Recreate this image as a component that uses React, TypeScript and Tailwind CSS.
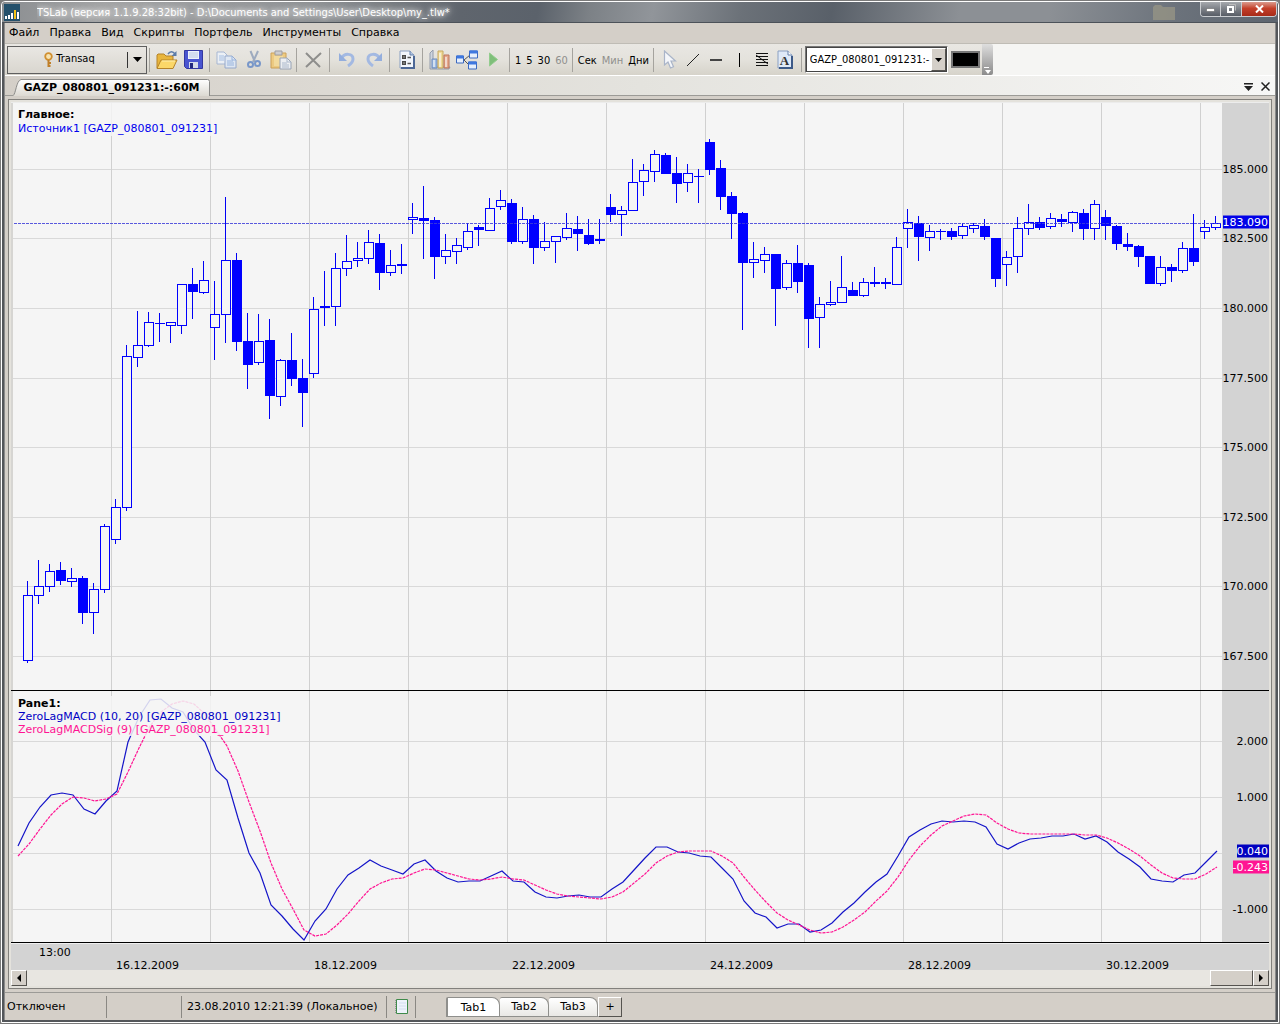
import React, { useState } from 'react';
import { clsx } from 'clsx';

// One hourly bar: high, body top, body bottom, low, 1 = falling (filled)
type Candle = [number, number, number, number, number];

const STEP = 11;

const candles: Candle[] = [
  [581, 595, 661, 663, 0], [560, 586, 596, 604, 0], [564, 571, 587, 592, 0], [562, 570, 581, 585, 1],
  [568, 578, 582, 587, 0], [576, 578, 613, 624, 1], [583, 589, 613, 634, 0], [524, 526, 590, 593, 0],
  [499, 507, 540, 544, 0], [345, 356, 508, 511, 0], [311, 345, 358, 367, 0], [312, 322, 346, 347, 0],
  [313, 323, 324, 342, 1], [322, 322, 326, 343, 0], [284, 284, 326, 334, 0], [268, 284, 292, 319, 1],
  [261, 280, 293, 294, 0], [281, 314, 328, 360, 0], [197, 260, 315, 343, 0], [253, 260, 342, 351, 1],
  [313, 341, 365, 389, 1], [314, 341, 363, 365, 0], [319, 340, 396, 419, 1], [359, 360, 397, 406, 0],
  [333, 360, 379, 386, 1], [359, 378, 393, 427, 1], [297, 309, 374, 378, 0], [271, 306, 308, 326, 1],
  [253, 268, 307, 326, 0], [235, 261, 269, 276, 0], [242, 258, 261, 267, 0], [230, 242, 259, 264, 0],
  [234, 243, 273, 290, 1], [250, 265, 273, 276, 0], [244, 264, 266, 274, 1], [203, 217, 220, 234, 0],
  [186, 218, 221, 259, 1], [217, 220, 257, 279, 1], [234, 250, 257, 264, 0], [238, 245, 252, 264, 0],
  [223, 231, 248, 250, 0], [225, 227, 230, 246, 1], [198, 208, 231, 231, 0], [190, 200, 207, 210, 0],
  [199, 203, 242, 244, 1], [207, 219, 242, 244, 0], [215, 219, 248, 264, 1], [222, 241, 248, 251, 0],
  [236, 236, 242, 263, 0], [213, 228, 238, 240, 0], [216, 229, 234, 251, 1], [219, 235, 244, 245, 1],
  [219, 239, 241, 244, 1], [194, 207, 215, 222, 1], [206, 210, 215, 236, 0], [159, 182, 211, 211, 0],
  [164, 170, 182, 196, 0], [150, 154, 172, 182, 0], [153, 155, 174, 174, 1], [157, 173, 184, 203, 1],
  [164, 173, 183, 192, 0], [169, 176, 177, 203, 1], [139, 142, 170, 175, 1], [160, 168, 197, 210, 1],
  [192, 196, 214, 239, 1], [212, 213, 263, 330, 1], [242, 259, 263, 278, 0], [247, 254, 261, 273, 0],
  [254, 254, 289, 326, 1], [260, 263, 288, 290, 0], [245, 263, 282, 293, 1], [263, 265, 319, 348, 1],
  [297, 304, 318, 348, 0], [281, 302, 305, 306, 0], [256, 287, 303, 303, 0], [282, 290, 296, 296, 1],
  [278, 282, 296, 297, 0], [267, 282, 284, 287, 1], [278, 282, 284, 289, 1], [237, 247, 285, 285, 0],
  [209, 222, 229, 248, 0], [216, 223, 237, 261, 1], [225, 231, 238, 251, 0], [229, 231, 232, 240, 1],
  [228, 231, 237, 240, 1], [223, 226, 236, 239, 0], [223, 225, 229, 233, 0], [219, 226, 237, 240, 1],
  [238, 238, 279, 287, 1], [251, 257, 265, 286, 0], [217, 228, 257, 273, 0], [204, 222, 229, 235, 0],
  [217, 222, 228, 230, 1], [213, 218, 227, 229, 0], [214, 219, 222, 227, 1], [211, 212, 223, 232, 0],
  [209, 213, 229, 240, 1], [200, 204, 229, 240, 0], [210, 217, 226, 240, 1], [225, 226, 244, 250, 1],
  [233, 244, 247, 251, 1], [245, 246, 257, 267, 1], [256, 256, 284, 284, 1], [256, 267, 284, 286, 0],
  [264, 267, 271, 282, 1], [242, 248, 271, 273, 0], [214, 248, 262, 266, 1], [220, 227, 232, 239, 0],
  [216, 223, 228, 230, 0],
];

const macd = [
  846, 823, 807, 795, 793, 795, 809, 814, 801, 791, 742, 717, 700, 699, 708, 712, 730, 742, 770, 780,
  818, 853, 873, 905, 916, 929, 940, 921, 909, 889, 875, 868, 860, 866, 870, 874, 864, 860, 871, 878,
  882, 881, 881, 876, 871, 881, 882, 892, 897, 898, 896, 895, 897, 897, 889, 882, 870, 858, 847, 847,
  852, 853, 856, 857, 868, 879, 901, 913, 917, 928, 924, 924, 932, 930, 923, 912, 903, 892, 882, 874,
  856, 837, 830, 824, 821, 822, 821, 822, 827, 844, 849, 843, 839, 838, 836, 836, 834, 839, 836, 842,
  852, 859, 867, 879, 881, 882, 875, 873, 862, 851,
];

const signal = [
  856, 844, 829, 815, 804, 797, 798, 801, 799, 794, 772, 748, 726, 712, 704, 701, 704, 714, 730, 746,
  771, 802, 831, 863, 889, 909, 930, 936, 934, 925, 914, 901, 889, 883, 879, 878, 873, 869, 870, 873,
  876, 879, 880, 879, 877, 879, 880, 885, 890, 894, 896, 897, 898, 899, 897, 892, 883, 874, 863, 856,
  852, 851, 851, 851, 856, 863, 877, 890, 902, 913, 920, 925, 930, 933, 932, 927, 920, 912, 901, 891,
  877, 860, 846, 835, 826, 821, 816, 814, 815, 823, 829, 833, 834, 834, 834, 834, 834, 835, 835, 838,
  843, 849, 856, 865, 873, 878, 879, 879, 874, 867,
];

// Chart space of the two panes
const PLOT = { left: 13, width: 1209 };
const MAIN = { top: 103, height: 587 };
const SUB = { top: 691, height: 251 };

const dayLines = [111, 210, 309, 408, 507, 606, 705, 804, 903, 1002, 1101, 1200];

const priceTicks = [
  { y: 169, label: '185.000' },
  { y: 238, label: '182.500' },
  { y: 308, label: '180.000' },
  { y: 378, label: '177.500' },
  { y: 447, label: '175.000' },
  { y: 517, label: '172.500' },
  { y: 586, label: '170.000' },
  { y: 656, label: '167.500' },
];

const macdTicks = [
  { y: 741, label: '2.000' },
  { y: 797, label: '1.000' },
  { y: 853, label: '' },
  { y: 909, label: '-1.000' },
];

const dates = [
  { x: 116, label: '16.12.2009' },
  { x: 314, label: '18.12.2009' },
  { x: 512, label: '22.12.2009' },
  { x: 710, label: '24.12.2009' },
  { x: 908, label: '28.12.2009' },
  { x: 1106, label: '30.12.2009' },
];

const toPoints = (values: number[]) => values.map((y, i) => `${18 + i * STEP},${y}`).join(' ');

const Grid = ({ ticks, top, height }: { ticks: { y: number }[]; top: number; height: number }) => (
  <g shapeRendering="crispEdges">
    {ticks.map((t) => (
      <rect key={t.y} x={PLOT.left} y={t.y} width={PLOT.width} height={1} fill="#d9d9d9" />
    ))}
    {dayLines.map((x) => (
      <rect key={x} x={x} y={top} width={1} height={height} fill="#d0d0d0" />
    ))}
  </g>
);

interface AxisLabelProps {
  y: number;
  pane: { top: number; height: number };
  className?: string;
  children: React.ReactNode;
}

const AxisLabel = ({ y, pane, className, children }: AxisLabelProps) => (
  <span
    className={clsx('absolute right-0 -translate-y-1/2 pr-px leading-[13px]', className)}
    style={{ top: `${((y - pane.top) / pane.height) * 100}%` }}
  >
    {children}
  </span>
);

const MainPane = () => (
  <section className="flex min-h-0 border-t border-[#ececec]" aria-label="Главное">
    <div className="relative min-w-0 flex-1 border-l-2 border-[#d6d5d2] bg-[#f5f5f5]">
      <svg
        className="block h-full w-full"
        viewBox={`${PLOT.left} ${MAIN.top} ${PLOT.width} ${MAIN.height}`}
        preserveAspectRatio="none"
      >
        <Grid ticks={priceTicks} top={MAIN.top} height={MAIN.height} />
        <g shapeRendering="crispEdges">
          {candles.map(([high, top, bottom, low, falling], i) => {
            const x = 23 + i * STEP;
            return (
              <g key={i}>
                <rect x={x + 4} y={high} width={1} height={low - high} fill="#0000f5" />
                {falling ? (
                  <rect x={x} y={top} width={10} height={bottom - top} fill="#0000ff" />
                ) : (
                  <rect
                    x={x + 0.5}
                    y={top + 0.5}
                    width={9}
                    height={bottom - top - 1}
                    fill="#f5f5f5"
                    stroke="#0000ff"
                  />
                )}
              </g>
            );
          })}
          <path d="M14 223.5H1222" stroke="#3c3cd8" strokeOpacity="0.85" strokeDasharray="3 1" />
        </g>
      </svg>
      <div className="absolute left-0 top-0 bg-[#f5f5f5]/85 px-[5px] pt-[5px] leading-[14px]">
        <h2 className="font-bold">Главное:</h2>
        <p className="text-[#0000ee]">Источник1 [GAZP_080801_091231]</p>
      </div>
    </div>
    <div className="relative w-[47px] bg-[#d3d3d3]">
      {priceTicks.map((t) => (
        <AxisLabel key={t.y} y={t.y} pane={MAIN}>{t.label}</AxisLabel>
      ))}
      <AxisLabel y={222} pane={MAIN} className="bg-[#0000e8] text-white">183.090</AxisLabel>
    </div>
  </section>
);

const MacdPane = () => (
  <section className="flex min-h-0" aria-label="Pane1">
    <div className="relative min-w-0 flex-1 border-l-2 border-[#d6d5d2] bg-[#f5f5f5]">
      <svg
        className="block h-full w-full"
        viewBox={`${PLOT.left} ${SUB.top} ${PLOT.width} ${SUB.height}`}
        preserveAspectRatio="none"
      >
        <Grid ticks={macdTicks} top={SUB.top} height={SUB.height} />
        <polyline points={toPoints(macd)} fill="none" stroke="#1414c8" strokeWidth="1.2" />
        <polyline
          points={toPoints(signal)}
          fill="none"
          stroke="#ff1493"
          strokeWidth="1.2"
          strokeDasharray="3 1"
        />
      </svg>
      <div className="absolute left-0 top-[5px] bg-[#f5f5f5]/85 px-[5px] pt-px leading-[13px]">
        <h2 className="font-bold">Pane1:</h2>
        <p className="text-[#0000c4]">ZeroLagMACD (10, 20) [GAZP_080801_091231]</p>
        <p className="text-[#ff1493]">ZeroLagMACDSig (9) [GAZP_080801_091231]</p>
      </div>
    </div>
    <div className="relative w-[47px] bg-[#d3d3d3]">
      {macdTicks.map((t) => (
        <AxisLabel key={t.y} y={t.y} pane={SUB}>{t.label}</AxisLabel>
      ))}
      <AxisLabel y={851} pane={SUB} className="bg-[#0000c0] text-white">0.040</AxisLabel>
      <AxisLabel y={867} pane={SUB} className="bg-[#ff1493] text-white">-0.243</AxisLabel>
    </div>
  </section>
);

const TimeAxis = () => (
  <div className="relative border-t border-[#efefef] bg-[#d3d3d3] leading-[13px]">
    <span className="absolute left-7 top-0.5">13:00</span>
    {dates.map((d) => (
      <span
        key={d.label}
        className="absolute top-[15px]"
        style={{ left: `${((d.x - 11) / 1258) * 100}%` }}
      >
        {d.label}
      </span>
    ))}
  </div>
);

const raised = 'border border-t-white border-l-white border-r-[#55534f] border-b-[#55534f] bg-[#d4cfc8]';

const ScrollBar = () => (
  <div className="flex bg-[#e8e6e1]">
    <button aria-label="Назад" className={clsx('flex w-4 items-center justify-center', raised)}>
      <svg width="4" height="8" viewBox="0 0 4 8"><path d="M4 0v8L0 4z" /></svg>
    </button>
    <div className="flex flex-1 justify-end">
      <div className={clsx('w-[43px]', raised)} />
    </div>
    <button aria-label="Вперёд" className={clsx('flex w-4 items-center justify-center', raised)}>
      <svg width="4" height="8" viewBox="0 0 4 8"><path d="M0 0v8l4-4z" /></svg>
    </button>
  </div>
);

const TitleBar = () => (
  <header className="flex h-[21px] items-center rounded-t-sm border-b border-[#4c5259] bg-[linear-gradient(100deg,#8b8e91_0%,#a2a3a4_8%,#8d9093_25%,#5f656d_36%,#5b626b_42%,#7c8186_46%,#91959a_51%,#6b7178_58%,#596069_65%,#8c9095_75%,#8c9095_82%,#6b727b_92%,#5d656f_100%)] pl-0.5 pr-px">
    <svg className="mr-[17px]" width="16" height="17" viewBox="0 0 16 17">
      <path d="M0 0h16v17H0z" fill="#24506b" />
      <path d="M1 12h2v3H1zM4 11h2v4H4zM7 9h2v6H7zM13 8h2v7h-2z" fill="#fff" />
      <path d="M10 6h2v9h-2z" fill="#f5c518" />
    </svg>
    <h1 className="flex-1 truncate font-['DejaVu_Sans_Condensed','Liberation_Sans',sans-serif] leading-[19px] text-white [text-shadow:0_0_5px_#fff,0_0_8px_#ddd]">
      TSLab (версия 1.1.9.28:32bit) - D:\Documents and Settings\User\Desktop\my_.tlw*
    </h1>
    <svg className="mr-6" width="24" height="16" viewBox="0 0 24 16">
      <path d="M1 3l2-2h6l2 2h12v13H1z" fill="#9b9986" opacity="0.7" />
    </svg>
    <div className="flex h-[15px] self-start overflow-hidden rounded-b border border-t-0 border-[#c9ccd0]">
      <button aria-label="Свернуть" className="flex w-5 items-center justify-center border-r border-[#c9ccd0] bg-linear-to-b from-[#a6a9ad] via-[#7c8087] via-50% to-[#585d66] pt-0.5">
        <svg width="9" height="4" viewBox="0 0 9 4"><path d="M.5.5h8v3h-8z" fill="#fff" stroke="#555" strokeWidth=".5" /></svg>
      </button>
      <button aria-label="Восстановить" className="flex w-[21px] items-center justify-center border-r border-[#c9ccd0] bg-linear-to-b from-[#a6a9ad] via-[#7c8087] via-50% to-[#585d66]">
        <svg width="10" height="10" viewBox="0 0 10 10" fill="none" stroke="#fff">
          <path d="M3 .5h6.500v6" stroke="#bbb" />
          <path d="M2 3h5v5H2z" strokeWidth="2" />
        </svg>
      </button>
      <button aria-label="Закрыть" className="flex w-[34px] items-center justify-center bg-linear-to-b from-[#d99a8d] via-[#c4402a] via-45% to-[#a82a18]">
        <svg width="9" height="8" viewBox="0 0 9 8" stroke="#fff" strokeWidth="2"><path d="M1 .5l7 7M8 .5l-7 7" /></svg>
      </button>
    </div>
  </header>
);

const menu = ['Файл', 'Правка', 'Вид', 'Скрипты', 'Портфель', 'Инструменты', 'Справка'];

const Separator = () => <span className="ml-0.5 mr-[3px] h-6 w-px shrink-0 bg-[#a5a39e]" />;

const IconButton = ({ label, narrow, children }: { label: string; narrow?: boolean; children: React.ReactNode }) => (
  <button
    aria-label={label}
    title={label}
    className={clsx('flex h-6 shrink-0 items-center justify-center', narrow ? 'w-[23px]' : 'w-[27px]')}
  >
    {children}
  </button>
);

const OpenIcon = () => (
  <svg width="22" height="20" viewBox="0 0 22 20">
    <path d="M1 18V5l1-1h6l2 2h7v4" fill="#e8b53c" stroke="#b58328" />
    <path d="M1 18.500L5 10h16l-4 8.500z" fill="#fbd768" stroke="#b58328" />
    <path d="M6 11h13" stroke="#fff0b0" />
    <path d="M12 4c2-3 5-3 7 0" fill="none" stroke="#5b7ba8" strokeWidth="1.500" />
    <path d="M20.500 1v5h-5z" fill="#5b7ba8" />
  </svg>
);

const SaveIcon = () => (
  <svg width="19" height="19" viewBox="0 0 19 19">
    <path d="M.5.5h18v18h-16l-2-2z" fill="#4a55d0" stroke="#3438a0" />
    <path d="M4 1h11v8H4z" fill="#eef2fb" />
    <path d="M5 3h9M5 5h9M5 7h9" stroke="#b9c6e4" />
    <path d="M5 12h9v6H5z" fill="#d6dbe8" />
    <path d="M6 13h3v5H6z" fill="#23287e" />
  </svg>
);

const CopyIcon = () => (
  <svg width="21" height="18" viewBox="0 0 21 18" opacity="0.75">
    <path d="M1 1h7l3 3v9H1z" fill="#eef4fd" stroke="#93a9d0" />
    <path d="M3 5h5M3 7h5M3 9h5" stroke="#8fb2e6" />
    <path d="M9 5h7l4 4v8H9z" fill="#dfeafb" stroke="#7f98c8" />
    <path d="M16 5v4h4M11 10h6M11 12h7M11 14h7" fill="none" stroke="#7fa5e0" />
  </svg>
);

const CutIcon = () => (
  <svg width="14" height="19" viewBox="0 0 14 19" fill="none" opacity="0.8">
    <path d="M3.500 1L8 12M11 1L6 12" stroke="#8c9db8" strokeWidth="2" />
    <circle cx="3.500" cy="14.500" r="2.500" stroke="#5f86c6" strokeWidth="2" />
    <circle cx="10.500" cy="13.500" r="2.500" stroke="#5f86c6" strokeWidth="2" />
  </svg>
);

const PasteIcon = () => (
  <svg width="22" height="20" viewBox="0 0 22 20" opacity="0.8">
    <path d="M1 3h15v15H1z" fill="#efc56c" stroke="#c79138" />
    <path d="M5 1h7v4H5z" fill="#c8c8cc" stroke="#8d8d95" />
    <path d="M4 6h9v10H4z" fill="#f6d98e" />
    <path d="M10 8h7l4 4v7H10z" fill="#eef2f8" stroke="#8795ad" />
    <path d="M17 8v4h4M12 13h5M12 15h7M12 17h7" fill="none" stroke="#9fb0ca" />
  </svg>
);

const UndoIcon = ({ flip }: { flip?: boolean }) => (
  <svg width="18" height="17" viewBox="0 0 18 17" className={clsx(flip && '-scale-x-100')}>
    <path d="M4 7c2-5 11-5 11 1 0 3-2 5-5 7" fill="none" stroke="#a3b9e2" strokeWidth="3" />
    <path d="M1 2v8h8z" fill="#94aedd" />
  </svg>
);

const PropsIcon = () => (
  <svg width="16" height="19" viewBox="0 0 16 19">
    <path d="M1 1h10l4 4v13H1z" fill="#f2f6fc" stroke="#8ba0c2" />
    <path d="M15 6v12H2" fill="none" stroke="#4d6896" strokeWidth="2" />
    <path d="M11 1v4h4" fill="#b4c6e2" stroke="#6480aa" />
    <path d="M3 5h4v4H3zM3 11h4v4H3z" fill="#4a4a4a" />
    <path d="M8.500 7.500H12M8.500 13.500H12" stroke="#555" strokeWidth="1.500" />
    <path d="M4.500 6.500h1v1h-1zM4.500 12.500h1v1h-1z" fill="#fff" />
  </svg>
);

const ChartIcon = () => (
  <svg width="22" height="21" viewBox="0 0 22 21" opacity="0.8">
    <path d="M1 4v16h19l1-2H4V1z" fill="#c9d2e0" stroke="#7f8ba0" />
    <path d="M3 10h5v9H3z" fill="#8db4ea" stroke="#5478b4" />
    <path d="M9 2h5v17H9z" fill="#f3d98a" stroke="#c19a3e" />
    <path d="M15 6h5v13h-5z" fill="#e79a7a" stroke="#b35a3a" />
    <path d="M5 11v7M11 4v14M17 8v10" stroke="#fff" strokeOpacity="0.6" strokeWidth="2" />
  </svg>
);

const NodesIcon = () => (
  <svg width="22" height="20" viewBox="0 0 22 20">
    <path d="M8 10l6-5M8 10l5 5" stroke="#555" />
    <g fill="#e6effc" stroke="#3a68c0">
      <path d="M.5 6h7v7h-7zM13.500 1h8v7h-8zM12.500 12h8v7h-8z" />
    </g>
    <path d="M.5 5.500h7v3h-7zM13.500.5h8v3h-8zM12.500 11.500h8v3h-8z" fill="#3f78e0" />
  </svg>
);

const PlayIcon = () => (
  <svg width="9" height="15" viewBox="0 0 9 15"><path d="M.5 1l8 6.500-8 6.500z" fill="#7fbf7a" stroke="#93cc8e" /></svg>
);

const CursorIcon = () => (
  <svg width="14" height="19" viewBox="0 0 14 19">
    <path d="M1.500 1v14l3.500-3 2.500 6 3-1.300-2.500-5.700H12.500z" fill="#f4f6fa" stroke="#a9b4c8" strokeWidth="1.200" />
  </svg>
);

const FibIcon = () => (
  <svg width="14" height="15" viewBox="0 0 14 15" stroke="#111">
    <path d="M1 1.500h12M1 4.500h12M1 7.500h12M1 10.500h12M1 13.500h12M1 3l12 9" />
  </svg>
);

const TextIcon = () => (
  <svg width="16" height="19" viewBox="0 0 16 19">
    <path d="M1 1h10l4 4v13H1z" fill="#dfe9f7" stroke="#8ba0c2" />
    <path d="M15 6v12H2" fill="none" stroke="#3d5a88" strokeWidth="2" />
    <path d="M11 1v4h4" fill="#fff" stroke="#6480aa" />
    <text x="7.500" y="15" textAnchor="middle" fontSize="13" fontWeight="bold" fontFamily="Liberation Serif, serif" fill="#333">A</text>
  </svg>
);

const Toolbar = () => {
  const [symbol, setSymbol] = useState('GAZP_080801_091231:-');

  return (
    <div className="flex h-8 border-b border-white bg-[#f5f5f3] font-['DejaVu_Sans_Condensed','Liberation_Sans',sans-serif]">
      <div className="flex items-center bg-linear-to-b from-[#e9e7e3] via-[#e4e2dc] to-[#d6d3ca] pl-0.5 pr-0.5">
        <div className="flex h-7 w-[140px] shrink-0 items-center border border-[#5f5f5f] bg-linear-to-b from-[#e9e7e3] to-[#d9d6cf]">
          <button className="flex flex-1 items-center justify-center gap-[3px] pl-1">
            <svg width="9" height="16" viewBox="0 0 9 16">
              <circle cx="4.500" cy="4.500" r="3.300" fill="#f7e3b0" stroke="#d08f30" strokeWidth="1.800" />
              <path d="M4.500 8v7M5 11h2M5 14h1.500" stroke="#c07f28" strokeWidth="2" />
            </svg>
            Transaq
          </button>
          <button aria-label="Поставщики данных" className="flex h-4 w-[19px] items-center justify-center border-l border-[#333]">
            <svg width="9" height="5" viewBox="0 0 9 5"><path d="M0 0h9L4.500 5z" /></svg>
          </button>
        </div>
        <Separator />
        <IconButton label="Открыть"><OpenIcon /></IconButton>
        <IconButton label="Сохранить"><SaveIcon /></IconButton>
        <Separator />
        <IconButton label="Копировать"><CopyIcon /></IconButton>
        <IconButton label="Вырезать"><CutIcon /></IconButton>
        <IconButton label="Вставить"><PasteIcon /></IconButton>
        <Separator />
        <IconButton label="Удалить">
          <svg width="17" height="16" viewBox="0 0 17 16" stroke="#8e8e8c" strokeWidth="2"><path d="M1 1l14 14M16 1L1 15" /></svg>
        </IconButton>
        <Separator />
        <IconButton label="Отменить"><UndoIcon /></IconButton>
        <IconButton label="Повторить"><UndoIcon flip /></IconButton>
        <Separator />
        <IconButton label="Свойства"><PropsIcon /></IconButton>
        <Separator />
        <IconButton label="График"><ChartIcon /></IconButton>
        <IconButton label="Схема"><NodesIcon /></IconButton>
        <IconButton label="Запустить"><PlayIcon /></IconButton>
        <Separator />
        <div className="flex gap-[5px] px-0.5 pt-[3px]">
          {['1', '5', '30', '60'].map((n) => (
            <button key={n} className={clsx(n === '60' && 'text-[#8f8f8c]')}>{n}</button>
          ))}
        </div>
        <Separator />
        <div className="flex gap-[5px] px-0.5 pt-[3px]">
          {['Сек', 'Мин', 'Дни'].map((n) => (
            <button key={n} className={clsx(n === 'Мин' && 'text-[#8f8f8c]')}>{n}</button>
          ))}
        </div>
        <Separator />
        <div className="flex px-0.5">
          <IconButton narrow label="Указатель"><CursorIcon /></IconButton>
          <IconButton narrow label="Линия">
            <svg width="14" height="14" viewBox="0 0 14 14" stroke="#222"><path d="M1 13L13 1" /></svg>
          </IconButton>
          <IconButton narrow label="Горизонтальная линия"><span className="h-0.5 w-3 bg-[#444]" /></IconButton>
          <IconButton narrow label="Вертикальная линия"><span className="h-3.5 w-px bg-black" /></IconButton>
          <IconButton narrow label="Фибоначчи"><FibIcon /></IconButton>
          <IconButton narrow label="Текст"><TextIcon /></IconButton>
        </div>
        <Separator />
        <div className="relative flex h-[27px] w-[143px] shrink-0 border border-b-white border-l-[#777] border-r-white border-t-[#777] bg-white">
          <select
            aria-label="Инструмент"
            value={symbol}
            onChange={(e) => setSymbol(e.target.value)}
            className="w-full appearance-none border border-[#444] pl-[3px] pt-0.5 outline-none"
          >
            <option>GAZP_080801_091231:-</option>
          </select>
          <span className={clsx('pointer-events-none absolute bottom-px right-px top-px flex w-[15px] items-center justify-center', raised)}>
            <svg width="7" height="4" viewBox="0 0 7 4"><path d="M0 0h7L3.500 4z" /></svg>
          </span>
        </div>
        <button aria-label="Цвет" className="ml-[3px] h-[17px] w-[29px] shrink-0 border-2 border-[#777] bg-black" />
      </div>
      <button aria-label="Параметры панели" className="flex w-[11px] items-end justify-center rounded-r-xs bg-linear-to-b from-[#dedede] to-[#8c8c8c] pb-px">
        <svg width="7" height="7" viewBox="0 0 7 7" fill="#fff"><path d="M0 0h5v1H0zM1 3h6L4 7z" /></svg>
      </button>
    </div>
  );
};

const DocumentTabs = () => (
  <div className="flex h-[19px] items-end bg-linear-to-r from-[#d4cfc8] via-[#e4e3de] to-[#f7f7f6] pl-2">
    <div className="relative z-10 -mb-px h-[17px] w-[197px]">
      <svg className="absolute inset-0 h-full w-full" viewBox="0 0 197 17" preserveAspectRatio="none">
        <defs>
          <linearGradient id="docTab" x1="0" y1="0" x2="0" y2="1">
            <stop offset="0" stopColor="#fff" />
            <stop offset="1" stopColor="#dcd9d2" />
          </linearGradient>
        </defs>
        <path d="M0 17C3 15 3 2 8 .5H194.500q2 0 2 2V17z" fill="url(#docTab)" />
        <path d="M0 16.500C3 15 3 2 8 .5H194.500q2 0 2 2V17" fill="none" stroke="#8a8a88" />
      </svg>
      <button className="relative w-full text-center font-bold leading-[17px]">GAZP_080801_091231:-:60M</button>
    </div>
    <div className="mb-1 ml-auto flex items-center gap-2 pr-[5px]">
      <button aria-label="Список окон">
        <svg className="block" width="9" height="8" viewBox="0 0 9 8"><path d="M0 0h9v1.500H0zM0 3h9L4.500 8z" fill="#222" /></svg>
      </button>
      <button aria-label="Закрыть вкладку">
        <svg className="block" width="9" height="9" viewBox="0 0 9 9" stroke="#222" strokeWidth="1.500"><path d="M.5.5l8 8M8.500.5l-8 8" /></svg>
      </button>
    </div>
  </div>
);

const StatusBar = () => {
  const [active, setActive] = useState('Tab1');

  return (
    <footer className="flex h-[27px] items-center">
      <span className="w-[101px] pl-0.5 pt-0.5">Отключен</span>
      <span className="h-[22px] w-[75px] border-l border-[#8a8883]" />
      <span className="flex h-[22px] w-[206px] items-center border-x border-[#8a8883] pl-[5px] pt-0.5">
        23.08.2010 12:21:39 (Локальное)
      </span>
      <span className="flex h-[22px] w-[29px] items-center justify-center border-r border-[#8a8883]">
        <svg width="13" height="15" viewBox="0 0 13 15">
          <path d="M1.500.5h11v14h-11z" fill="#eef3fb" stroke="#3f8a4a" />
          <path d="M.5 1v13" stroke="#999" strokeDasharray="1 1" />
          <path d="M4 4h7M4 7h7M4 10h7" stroke="#d3def0" />
        </svg>
      </span>
      <nav className="ml-[30px] mt-px flex h-5 items-stretch">
        {['Tab1', 'Tab2', 'Tab3'].map((tab) => (
          <button
            key={tab}
            onClick={() => setActive(tab)}
            className={clsx(
              'rounded-tl-xs rounded-tr-lg border-t border-r border-[#8f8f8c]',
              active === tab
                ? 'w-[54px] border-b border-l-2 bg-white pt-0.5'
                : 'w-[49px] border-b bg-linear-to-b from-white to-[#e9e8e5] pt-px'
            )}
          >
            {tab}
          </button>
        ))}
        <button aria-label="Новая вкладка" className={clsx('w-6', raised)}>+</button>
      </nav>
    </footer>
  );
};

export default function App() {
  return (
    <div className="flex h-screen min-h-[480px] flex-col border border-[#7a7a7a] bg-[#7a7a7a] font-['DejaVu_Sans',Verdana,sans-serif] text-[11px] text-black">
      <div className="flex min-h-0 flex-1 flex-col rounded-t border border-white bg-[#53565a]">
        <TitleBar />
        <main className="mx-0.5 mb-0.5 flex min-h-0 flex-1 flex-col border-x border-[#8a8a8a] bg-[#d4cfc8]">
          <nav className="flex h-[21px] items-center gap-[10px] border-b border-[#bfbcb5] pl-1 pt-px">
            {menu.map((item) => (
              <button key={item}>{item}</button>
            ))}
          </nav>
          <Toolbar />
          <DocumentTabs />
          <div className="flex min-h-0 flex-1 flex-col border-y border-[#9c9b97] p-[3px]">
            <div className="flex min-h-0 flex-1 border border-[#82807c] bg-[#e4e2dc] p-0.5">
              <div className="grid min-h-0 flex-1 grid-cols-[minmax(0,1fr)] grid-rows-[minmax(0,588fr)_1px_minmax(0,251fr)_1px_27px_16px]">
                <MainPane />
                <div className="bg-black" />
                <MacdPane />
                <div className="bg-black" />
                <TimeAxis />
                <ScrollBar />
              </div>
            </div>
          </div>
          <StatusBar />
        </main>
      </div>
    </div>
  );
}
